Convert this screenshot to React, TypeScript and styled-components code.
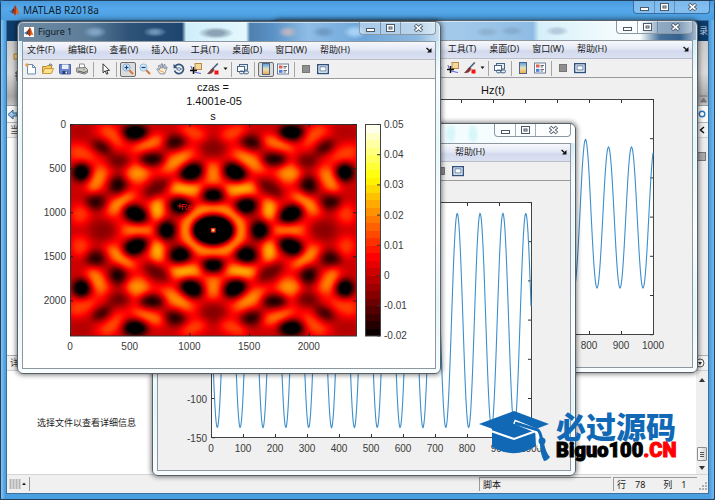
import React from "react";
import styled, { createGlobalStyle, css } from "styled-components";

const GlobalStyle = createGlobalStyle`
  * { box-sizing: border-box; }
  body { margin: 0; background: #2d5d8c; }
  button { font: inherit; color: inherit; border: 0; padding: 0; margin: 0; background: none; }
`;

const uiFont = `"Noto Sans", "Noto Sans CJK SC", sans-serif`;
const plotFont = `"Liberation Sans", Arial, sans-serif`;

/* ---------- main window ---------- */

const Desktop = styled.div`
  position: relative;
  min-height: 100vh;
  overflow: hidden;
  font-family: ${uiFont};
  font-size: 9px;
  line-height: 12px;
  color: #1a1a1a;
`;

const MainWindow = styled.section`
  display: flex;
  flex-direction: column;
  min-height: 100vh;
  padding: 0 5px 5px;
  border: 1px solid #23405f;
  border-radius: 5px 5px 2px 2px;
  background: linear-gradient(90deg, #8cc4ee 0, #4a9fe0 4px, #4a9fe0 calc(100% - 4px), #79b9ea 100%);
`;

const MainTitleBar = styled.header`
  display: flex;
  align-items: flex-start;
  justify-content: space-between;
  height: 19px;
  margin: 0 -5px;
  padding: 0 4px 0 8px;
  background: linear-gradient(#4a9ade 0, #55a8e9 40%, #4b9fe1 100%);
`;

const TitleText = styled.h1`
  display: flex;
  align-items: center;
  gap: 3px;
  margin: 0;
  height: 18px;
  font-size: 10px;
  font-weight: 400;
  color: #10202e;
`;

const MainClient = styled.div`
  display: flex;
  flex-direction: column;
  flex: 1;
  border: 1px solid #3c6e9e;
  background: #f0f0f0;
`;

const NavyStrip = styled.div`
  display: flex;
  align-items: center;
  justify-content: flex-end;
  height: 20px;
  background: #0d3c6a;
  color: #b9cbe0;
`;

const Toolstrip = styled.div`
  display: flex;
  align-items: center;
  justify-content: space-between;
  height: 65px;
  border-bottom: 1px solid #999;
  background: linear-gradient(#c9c9c9 0, #dadada 50%, #a9a9a9 86%, #c4c4c4 100%);
`;

const AddressBar = styled.div`
  display: flex;
  align-items: center;
  justify-content: space-between;
  height: 17px;
  padding-right: 1px;
  border-bottom: 1px solid #b5b5b5;
  background: #f8f8f8;
`;

const PanelHeader = styled.div`
  display: flex;
  align-items: center;
  justify-content: space-between;
  height: 15px;
  padding: 0 3px;
  border-bottom: 1px solid #cfcfcf;
  background: #f1f1f1;
  color: #444;
`;

const UpperPanel = styled.div`
  display: flex;
  justify-content: space-between;
  flex: 1;
  border-bottom: 1px solid #b0b0b0;
  background: #fff;
`;

const MarkerRail = styled.div`
  width: 12px;
  padding-top: 14px;
  background: #ececec;
`;

const Marker = styled.div`
  height: 9px;
  margin-right: 2px;
  border: 1px solid #777;
  background: #aaa;
`;

const DetailsPanel = styled.div`
  display: flex;
  height: 103px;
  background: #fff;
`;

const DetailsMessage = styled.p`
  flex: 1;
  margin: 0;
  padding: 46px 0 0 30px;
`;

const ScrollRail = styled.div`
  display: flex;
  flex-direction: column;
  align-items: center;
  justify-content: space-between;
  width: 12px;
  padding: 7px 0 4px;
  background: #efefef;
`;

const ScrollEnd = styled.div`
  display: flex;
  flex-direction: column;
  align-items: center;
  gap: 5px;
`;

const Thumb = styled.div`
  display: flex;
  flex-direction: column;
  justify-content: center;
  gap: 1px;
  width: 10px;
  height: 14px;
  padding: 0 2px;
  border: 1px solid #8c8c8c;
  border-radius: 1px;
  background: linear-gradient(90deg, #fafafa, #d5d5d5);
`;

const ThumbLine = styled.span`
  height: 1px;
  background: #555;
`;

const StatusBar = styled.footer`
  display: flex;
  align-items: center;
  height: 19px;
  border-top: 1px solid #d5d5d5;
  background: #f0f0f0;
`;

const StatusCell = styled.div<{ $width: number }>`
  display: flex;
  align-items: center;
  gap: 9px;
  width: ${(p) => p.$width}px;
  height: 14px;
  margin-right: 2px;
  padding-left: 3px;
  border-top: 1px solid #9a9a9a;
  border-left: 1px solid #9a9a9a;
`;

const StatusGrip = styled.div`
  display: flex;
  flex: 1;
  align-items: center;
  padding-left: 2px;
`;

/* ---------- caption buttons ---------- */

const Captions = styled.div<{ $tone: "blue" | "clear" }>`
  display: flex;
  height: 13px;
  border: 1px solid ${(p) => (p.$tone === "blue" ? "#3a6ea3" : "#8b98a3")};
  border-top: 0;
  border-radius: 0 0 4px 4px;
  background: ${(p) => (p.$tone === "blue" ? "rgba(170,210,245,.55)" : "rgba(255,255,255,.4)")};
`;

const CaptionButton = styled.button<{ $wide?: boolean }>`
  display: flex;
  align-items: center;
  justify-content: center;
  width: ${(p) => (p.$wide ? 35 : 20)}px;
  & + & { border-left: 1px solid rgba(70, 95, 120, .5); }
`;

const WindowButtons = ({ tone }: { tone: "blue" | "clear" }) => (
  <Captions $tone={tone}>
    <CaptionButton aria-label="Minimize">
      <svg width="11" height="10" viewBox="0 0 11 10"><rect x="1.500" y="5.500" width="8" height="3" fill="#fff" stroke="#4c5967" /></svg>
    </CaptionButton>
    <CaptionButton aria-label="Maximize">
      <svg width="11" height="10" viewBox="0 0 11 10"><rect x="1.500" y="1.500" width="8" height="7" fill="#fff" stroke="#4c5967" /><rect x="4" y="4" width="3" height="2" fill="#dfe8f0" stroke="#4c5967" /></svg>
    </CaptionButton>
    <CaptionButton $wide aria-label="Close">
      <svg width="11" height="10" viewBox="0 0 11 10"><path d="M2 2l7 6M9 2L2 8" stroke="#4c5967" strokeWidth="3.600" /><path d="M2.500 2.400l6 5.200M8.500 2.400l-6 5.200" stroke="#fff" strokeWidth="1.600" /></svg>
    </CaptionButton>
  </Captions>
);

const MatlabMark = () => (
  <svg width="11" height="11" viewBox="0 0 11 11">
    <path d="M0 6.500L3.500 4.500 5 6.500 3 8.500Z" fill="#3a7cb8" />
    <path d="M3.500 4.500C5 3.500 5.500 1 6.500 .3L5 6.500 3 8.500Z" fill="#5a2a20" />
    <path d="M6.500 .3C8 1.500 9 7 11 9.500 9 8 8 8 6.300 10.500 5.500 9.500 5 8 3.600 8 5.200 7 5.600 2.500 6.500 .3Z" fill="#e0661c" />
    <path d="M6.500 .3C7.300 2 7.500 6 6.300 10.500 5.500 9.500 5 8 3.600 8 5.200 7 5.600 2.500 6.500 .3Z" fill="#a8321a" />
  </svg>
);

/* ---------- figure window ---------- */

type Skin = "one" | "two" | "three";

const skins: Record<Skin, string> = {
  one: `radial-gradient(ellipse 12px 6px at 77px 10px, #7fa3c4 30%, transparent),
    radial-gradient(ellipse 12px 5px at 137px 10px, #6f93b6 30%, transparent),
    radial-gradient(ellipse 18px 6px at 198px 11px, #8ba3b4 40%, transparent),
    radial-gradient(ellipse 10px 6px at 270px 10px, #b6b3c3 30%, transparent),
    radial-gradient(ellipse 12px 6px at 306px 10px, #6f9cc6 30%, transparent),
    radial-gradient(ellipse 12px 7px at 337px 10px, #a5d2f6 30%, transparent),
    linear-gradient(90deg, #6e8aa2 0, #5c7d99 70px, #2f5378 110px, #1d456f 164px, #cfeefb 168px, #e3f8fd 228px, #4d80ae 232px, #5b92c6 255px, #8ebde6 290px, #6ea6da 345px, #8db9df 400px, #d3e6f3 424px)`,
  two: `radial-gradient(ellipse 6px 12px at 298px 10px, #d6f6fa 40%, transparent),
    radial-gradient(ellipse 6px 12px at 320px 10px, #d6f6fa 40%, transparent),
    linear-gradient(90deg, #e6f6fa 0, #fff 70px, #f2fcfe 300px, #fff 424px)`,
  three: `radial-gradient(ellipse 12px 5px at 212px 11px, #8fb4d3 40%, transparent),
    radial-gradient(ellipse 12px 5px at 237px 10px, #87aed1 40%, transparent),
    radial-gradient(ellipse 12px 5px at 282px 10px, #b3cbdc 40%, transparent),
    linear-gradient(90deg, #a9cdeb 0, #a3c9ea 180px, #8fbce4 258px, #d5effa 264px, #f0fafd 330px, #f9fdfe 365px, #46719a 385px, #35618d 405px, #b7cbdc 424px)`,
};

const places: Record<Skin, { left: number; top: number }> = {
  one: { left: 17, top: 21 },
  two: { left: 152, top: 123 },
  three: { left: 274, top: 20 },
};

const Frame = styled.section<{ $skin: Skin }>`
  position: absolute;
  left: ${(p) => places[p.$skin].left}px;
  top: ${(p) => places[p.$skin].top}px;
  display: flex;
  flex-direction: column;
  width: 424px;
  padding: 0 4px 4px;
  border: 1px solid #566068;
  border-radius: 6px;
  background: ${(p) => skins[p.$skin]} 0 0 / 100% 19px no-repeat,
    linear-gradient(#bfe3f2 0, #f4fcfe 15%, #e6f8fb 35%, #fbfeff 60%, #e4f6fb 80%, #f8fdff 100%);
  box-shadow: 0 0 5px 1px rgba(0, 0, 0, .5), inset 0 0 0 1px rgba(255, 255, 255, .55);
`;

const FigureTitleBar = styled.header`
  display: flex;
  justify-content: space-between;
  align-items: flex-start;
  height: 19px;
  padding-left: 2px;
`;

const FigureTitle = styled.h2<{ $covered?: boolean }>`
  display: flex;
  align-items: center;
  gap: 4px;
  margin: 0;
  height: 19px;
  font-size: 9px;
  font-weight: 400;
  color: #0c1a26;
  visibility: ${(p) => (p.$covered ? "hidden" : "visible")};
`;

const MarkTile = styled.span`
  display: flex;
  width: 10px;
  height: 10px;
  background: #fff;
  svg { width: 10px; height: 10px; }
`;

const FigureClient = styled.div`
  display: flex;
  flex-direction: column;
  border: 1px solid #8e979e;
  background: #f0f0f0;
`;

const MenuBar = styled.nav`
  display: flex;
  align-items: center;
  gap: 13px;
  height: 18px;
  padding: 0 3px 1px 4px;
  border-bottom: 1px solid #b9bdc6;
  background: linear-gradient(#f7f8fc 0, #e3e8f5 45%, #d3daee 60%, #dbe1f2 100%);
  white-space: nowrap;
`;

const MenuItem = styled.button<{ $covered: boolean }>`
  visibility: ${(p) => (p.$covered ? "hidden" : "visible")};
`;

const DockArrow = styled.span`
  display: flex;
  margin-left: auto;
`;

const ToolBar = styled.div`
  display: flex;
  align-items: center;
  gap: 1px;
  height: 19px;
  border-bottom: 1px solid #9b9b9b;
  background: #f0f0f0;
`;

const Tool = styled.button<{ $pressed?: boolean; $narrow?: boolean }>`
  display: flex;
  align-items: center;
  justify-content: center;
  width: ${(p) => (p.$narrow ? 6 : 16)}px;
  height: 15px;
  border-radius: 2px;
  ${(p) => p.$pressed && css`
    border: 1px solid #6d6d6d;
    background: #dcdcdc;
  `}
`;

const Divider = styled.span`
  width: 1px;
  height: 15px;
  margin: 0 2px;
  background: #a5a5a5;
`;

const Canvas = styled.div<{ $white?: boolean }>`
  background: ${(p) => (p.$white ? "#fff" : "#f0f0f0")};
  svg { display: block; width: 100%; height: auto; }
`;

const Icon = ({ children }: { children: React.ReactNode }) => (
  <svg width="12" height="12" viewBox="0 0 12 12" fill="none">{children}</svg>
);

const icons = {
  fresh: <Icon><path d="M2.500 1.500h5l3 3v6.500h-8Z" fill="#fff" stroke="#6a8cb0" /><path d="M7.500 1.500v3h3" stroke="#6a8cb0" /><circle cx="2" cy="2" r="1.700" fill="#e89a55" /></Icon>,
  open: <Icon><path d="M.500 10.500v-7h4l1-1h4v3" fill="#f2cc66" stroke="#b98a38" /><path d="M.500 10.500l2-5h9l-2 5Z" fill="#ffe08a" stroke="#c99a3c" /><path d="M7 1.500q2-1.500 3.500 1" stroke="#4b7cae" /></Icon>,
  save: <Icon><path d="M.500 1.500h11v9.500h-10l-1-1Z" fill="#6b86cf" stroke="#4a66a8" /><rect x="3" y="1.500" width="6.500" height="4.500" fill="#e9eefb" /><rect x="3.500" y="8" width="5" height="3" fill="#2b3d70" /><rect x="6.500" y="8.500" width="1.500" height="2" fill="#fff" /></Icon>,
  print: <Icon><path d="M3.500 5V1h4.500l1 4" fill="#fff" stroke="#8a8a8a" /><path d="M.700 5l9-.500 1.800 2v3l-3 1.500-7.800-2Z" fill="#c9c9c9" stroke="#777" /><path d="M2 8l6 1.500 2.500-1" stroke="#555" /><rect x="7" y="6" width="2" height="1" fill="#7bbf4a" /></Icon>,
  pointer: <Icon><path d="M4 .800v9l2.200-2 1.400 3.400 1.400-.600-1.400-3.200h2.900Z" fill="#fff" stroke="#222" strokeWidth=".900" /></Icon>,
  zoomIn: <Icon><path d="M7 7l4 4" stroke="#d8793a" strokeWidth="2.200" /><circle cx="4.500" cy="4.500" r="3.600" fill="#cfe6fa" stroke="#8aaed0" /><path d="M2.500 4.500h4M4.500 2.500v4" stroke="#16407a" strokeWidth="1.200" /></Icon>,
  zoomOut: <Icon><path d="M7 7l4 4" stroke="#d8793a" strokeWidth="2.200" /><circle cx="4.500" cy="4.500" r="3.600" fill="#cfe6fa" stroke="#9abcdb" /><path d="M2.500 4.500h4" stroke="#16407a" strokeWidth="1.200" /></Icon>,
  hand: <Icon><path d="M4 10.800C3 9 1.500 7.500.700 6l1-.600L3.500 7 2.500 2.500l1.200-.300L5 5.500 5 1l1.300-.200.500 4.500L8 1.500l1.200.300L8.700 6l1.500-2.200 1 .500L9.500 8.500 8.500 11Z" fill="#fff0d5" stroke="#66789a" strokeWidth=".800" /><path d="M3.500 7.500l5 2" stroke="#e3a458" /></Icon>,
  rotate: <Icon><path d="M2 3.500a4.600 4.600 0 1 1-.500 4" stroke="#35557c" strokeWidth="1.700" /><path d="M.500.800v4.400h4.200Z" fill="#35557c" /><path d="M3.500 6q2.500-3 5 0-2.500 3-5 0" stroke="#5f7fa5" /></Icon>,
  datatip: <Icon><rect x="5" y=".500" width="6.500" height="6" fill="#f5d99a" stroke="#b98a4a" /><path d="M1 3q1 6 5 6.500l5 1" stroke="#5960d8" /><path d="M0 7.500h7M3.500 4v7" stroke="#111" strokeWidth="1.500" /></Icon>,
  brush: <Icon><path d="M10.800.500L5.500 6" stroke="#46617f" strokeWidth="1.600" /><path d="M6 5.500C3.500 5.500 3.500 9 .500 10.500c3 .800 6-1 6.500-4Z" fill="#8d3230" stroke="#493038" strokeWidth=".500" /><rect x="7.500" y="7.500" width="4" height="4" fill="#f31414" /></Icon>,
  down: <svg width="5" height="4" viewBox="0 0 5 4"><path d="M0.500.500h4L2.500 3Z" fill="#111" /></svg>,
  link: <Icon><rect x="2.500" y="1.500" width="8" height="5.500" fill="#e4eaf2" stroke="#4a6486" /><rect x=".500" y="3.500" width="7" height="5" fill="#fff" stroke="#4a6486" /><rect x="2.500" y="8" width="4.500" height="2.800" rx="1.400" stroke="#42658f" /><rect x="6.500" y="8" width="5" height="2.800" rx="1.400" stroke="#42658f" /></Icon>,
  colorbar: <Icon><defs><linearGradient id="cb" x2="0" y2="1"><stop stopColor="#4e9de6" /><stop offset=".5" stopColor="#e8e2b8" /><stop offset="1" stopColor="#f5a742" /></linearGradient></defs><rect x="2.500" y=".500" width="7" height="11" fill="url(#cb)" stroke="#4c6788" /></Icon>,
  legend: <Icon><rect x=".500" y="1" width="11" height="10" fill="#fff" stroke="#68809c" /><rect x="2" y="2.500" width="3.500" height="3" fill="#e2604a" /><rect x="2" y="6.800" width="3.500" height="3" fill="#4a80d8" /><path d="M6.500 3.500h3.500M6.500 5h2.500M6.500 7.500h3.500M6.500 9h2.500" stroke="#556" strokeWidth=".900" /></Icon>,
  square: <Icon><rect x="2.500" y="2.500" width="7" height="7" fill="#8f8f8f" stroke="#777" /></Icon>,
  dock: <Icon><rect x=".700" y="1.700" width="10.600" height="8.800" fill="#fff" stroke="#2d527e" strokeWidth="1.400" /><rect x="3" y="3.800" width="6" height="4.200" fill="#fff" stroke="#5c7fa8" /></Icon>,
};

const menus = ["文件(F)", "编辑(E)", "查看(V)", "插入(I)", "工具(T)", "桌面(D)", "窗口(W)", "帮助(H)"];

/* covered: how many menus, counted from the left, lie behind the window in front. */
const FigureWindow = ({ skin, title, active, white, covered = 0, children }: {
  skin: Skin; title: string; active?: boolean; white?: boolean; covered?: number; children: React.ReactNode;
}) => (
  <Frame $skin={skin}>
    <FigureTitleBar>
      <FigureTitle $covered={covered > 0}><MarkTile><MatlabMark /></MarkTile>{title}</FigureTitle>
      <WindowButtons tone="clear" />
    </FigureTitleBar>
    <FigureClient>
      <MenuBar>
        {menus.map((m, i) => <MenuItem key={m} $covered={i < covered}>{m}</MenuItem>)}
        <DockArrow><svg width="6" height="6" viewBox="0 0 6 6"><path d="M.500 1L4 4" stroke="#111" strokeWidth="1.400" /><path d="M5.500 1v4.500H1Z" fill="#111" /></svg></DockArrow>
      </MenuBar>
      <ToolBar>
        <Tool aria-label="New">{icons.fresh}</Tool>
        <Tool aria-label="Open">{icons.open}</Tool>
        <Tool aria-label="Save">{icons.save}</Tool>
        <Tool aria-label="Print">{icons.print}</Tool>
        <Divider />
        <Tool aria-label="Select">{icons.pointer}</Tool>
        <Divider />
        <Tool aria-label="Zoom in" $pressed={active}>{icons.zoomIn}</Tool>
        <Tool aria-label="Zoom out">{icons.zoomOut}</Tool>
        <Tool aria-label="Pan">{icons.hand}</Tool>
        <Tool aria-label="Rotate">{icons.rotate}</Tool>
        <Tool aria-label="Data cursor">{icons.datatip}</Tool>
        <Tool aria-label="Brush">{icons.brush}</Tool>
        <Tool aria-label="Brush colors" $narrow>{icons.down}</Tool>
        <Divider />
        <Tool aria-label="Link plot">{icons.link}</Tool>
        <Divider />
        <Tool aria-label="Colorbar" $pressed={active}>{icons.colorbar}</Tool>
        <Tool aria-label="Legend">{icons.legend}</Tool>
        <Divider />
        <Tool aria-label="Hide tools">{icons.square}</Tool>
        <Tool aria-label="Show tools">{icons.dock}</Tool>
      </ToolBar>
      <Canvas $white={white}>{children}</Canvas>
    </FigureClient>
  </Frame>
);

/* ---------- plots ---------- */

const TickText = styled.text`
  font-family: ${plotFont};
  font-size: 10px;
  fill: #3a3a3a;
`;

const PlotTitle = styled.text`
  font-family: ${plotFont};
  font-size: 11px;
  text-anchor: middle;
  fill: #111;
`;

const FieldLabel = styled.text`
  font-family: ${plotFont};
  font-size: 9px;
  fill: #e01010;
`;

/* Lobes of one quadrant: cx, cy, rx, ry, rotation, field level (0 black .. 1 white). */
type Lobe = [number, number, number, number, number, number];
const lobes: Lobe[] = [
  [140, 60, 90, 30, 35, 0.38],
  [320, 110, 90, 36, -25, 0.4],
  [190, 245, 110, 50, -30, 0.38],
  [430, 150, 50, 50, 0, 0.4],
  [344, 195, 80, 32, 0, 0.42],
  [60, 130, 70, 60, 20, 0.38],
  [30, 20, 40, 24, 0, 0.26],
  [98, 317, 40, 34, 0, 0.21],
  [428, 70, 42, 30, 0, 0.2],
  [258, 192, 46, 22, -30, 0.13],
  [144, 108, 34, 22, 0, 0.14],
  [125, 30, 42, 20, 42, 0.5],
  [236, 57, 50, 18, -18, 0.58],
  [319, 109, 50, 18, -30, 0.62],
  [344, 193, 48, 18, 4, 0.68],
  [430, 150, 20, 36, 0, 0.6],
  [201, 147, 36, 28, 0, 0.6],
  [80, 167, 22, 44, 28, 0.59],
  [32, 88, 44, 26, 25, 0.47],
  [149, 235, 48, 20, -38, 0.62],
  [261, 255, 20, 36, 0, 0.68],
  [204, 318, 52, 19, 0, 0.6],
  [30, 268, 28, 32, 35, 0.46],
  [368, 25, 44, 21, 20, 0.48],
  [194, 24, 36, 21, 0, -0.17],
  [33, 143, 26, 27, 0, -0.17],
  [94, 68, 32, 17, 30, 0.02],
  [245, 105, 38, 17, 0, -0.04],
  [314, 54, 32, 20, -10, 0.01],
  [363, 143, 35, 25, -25, -0.17],
  [430, 212, 34, 21, 0, -0.17],
  [194, 268, 37, 24, 25, -0.17],
  [288, 318, 25, 28, 0, -0.15],
  [330, 243, 31, 23, 10, -0.17],
  [142, 182, 25, 27, 0, -0.01],
  [75, 232, 30, 22, 0, 0.02],
];

const grey = (v: number) => {
  const g = Math.round(((v + 0.3) / 1.2) * 255);
  return `rgb(${g},${g},${g})`;
};

const hot = (v: number) => {
  const c = (n: number) => Math.round(Math.max(0, Math.min(1, n)) * 255);
  return `rgb(${c(v / 0.375)},${c((v - 0.375) / 0.375)},${c((v - 0.75) / 0.25)})`;
};

const bands = Array.from({ length: 28 }, (_, i) => (i + 0.5) / 28);

const FieldMap = () => (
  <svg viewBox="1 0 412 289">
    <defs>
      <filter id="field" x="0" y="0" width="100%" height="100%" colorInterpolationFilters="sRGB">
        <feGaussianBlur stdDeviation="12" />
        <feComponentTransfer>
          <feFuncR type="linear" slope="3.2" intercept="-0.8" />
          <feFuncG type="linear" slope="3.2" intercept="-1.8" />
          <feFuncB type="linear" slope="4.8" intercept="-4.2" />
        </feComponentTransfer>
      </filter>
      <clipPath id="fieldClip"><rect width="856" height="634" /></clipPath>
      <g id="quadrant">
        {lobes.map(([cx, cy, rx, ry, a, v], i) => (
          <ellipse key={i} cx={cx} cy={cy} rx={rx} ry={ry} transform={`rotate(${a} ${cx} ${cy})`} fill={grey(v)} />
        ))}
      </g>
      <clipPath id="quarter"><rect x="-60" y="-60" width="489" height="378" /></clipPath>
    </defs>
    <PlotTitle x="191" y="12">czas =</PlotTitle>
    <PlotTitle x="192" y="26">1.4001e-05</PlotTitle>
    <PlotTitle x="191" y="41">s</PlotTitle>
    <g transform="translate(48.500 45.500) scale(.3335)">
      <g clipPath="url(#fieldClip)">
        <g filter="url(#field)">
          <rect x="-60" y="-60" width="976" height="754" fill={grey(0.3)} />
          <g clipPath="url(#quarter)"><use href="#quadrant" /></g>
          <g transform="translate(856 0) scale(-1 1)"><g clipPath="url(#quarter)"><use href="#quadrant" /></g></g>
          <g transform="translate(0 634) scale(1 -1)"><g clipPath="url(#quarter)"><use href="#quadrant" /></g></g>
          <g transform="translate(856 634) scale(-1 -1)"><g clipPath="url(#quarter)"><use href="#quadrant" /></g></g>
          <ellipse cx="428" cy="317" rx="81" ry="63" fill={grey(-0.3)} stroke={grey(0.64)} strokeWidth="36" />
        </g>
        <rect x="421" y="310" width="14" height="14" fill="#ff3010" />
        <rect x="425" y="314" width="6" height="6" fill="#ffe9a0" />
      </g>
    </g>
    <FieldLabel x="159" y="131">Re</FieldLabel>
    <path d="M155.500 127h5M158 124.500v5" stroke="#e01010" />
    <rect x="48.500" y="45.500" width="286" height="211.500" fill="none" stroke="#333" />
    {[0, 500, 1000, 1500, 2000].map((n) => (
      <React.Fragment key={n}>
        <path d={`M${48.5 + n * 0.1194} 257v-3M${48.5 + n * 0.1194} 45v3M48 ${45.5 + n * 0.0882}h3M334 ${45.5 + n * 0.0882}h-3`} stroke="#222" />
        <TickText x={48 + n * 0.1194} y="271" textAnchor="middle">{n}</TickText>
        <TickText x="44" y={49 + n * 0.0882} textAnchor="end">{n}</TickText>
      </React.Fragment>
    ))}
    <g shapeRendering="crispEdges">
      {bands.map((v, i) => (
        <rect key={i} x="343" y={257 - ((i + 1) * 211.5) / 28} width="15" height="8" fill={hot(v)} />
      ))}
    </g>
    <rect x="343.500" y="45.500" width="15" height="211.500" fill="none" stroke="#444" />
    {["0.05", "0.04", "0.03", "0.02", "0.01", "0", "-0.01", "-0.02"].map((t, i) => (
      <React.Fragment key={t}>
        <path d={`M358 ${45.5 + i * 30.2}h-3`} stroke="#333" />
        <TickText x="362" y={49 + i * 30.2}>{t}</TickText>
      </React.Fragment>
    ))}
  </svg>
);

const trace = (y: (x: number) => number) =>
  Array.from({ length: 640 }, (_, i) => 54.5 + i / 2)
    .map((x, i) => `${i ? "L" : "M"}${x.toFixed(1)} ${y(x).toFixed(2)}`)
    .join("");

const tracePoint = trace((x) => 139.5 + 107 * Math.cos((2 * Math.PI * (x - 60.3)) / 22.85));
const traceHz = trace((x) => {
  const c = Math.cos((2 * Math.PI * (x - 306.5)) / 23);
  return 139.5 - (x < 318 && c > 0 ? 78 : 70.5) * c;
});

/* firstX, firstY: the first tick of each axis whose label is drawn. */
const WavePlot = ({ title, d, firstX, firstY }: { title?: string; d: string; firstX: number; firstY: number }) => (
  <svg viewBox="1 0 412 289">
    {title && <PlotTitle x="214" y="16">{title}</PlotTitle>}
    <rect x="54.500" y="21.500" width="320" height="235" fill="#fff" stroke="#444" />
    {Array.from({ length: 11 }, (_, i) => (
      <React.Fragment key={i}>
        <path d={`M${54.5 + i * 32} 256v-3M${54.5 + i * 32} 22v3`} stroke="#333" />
        {i >= firstX && <TickText x={54 + i * 32} y="271" textAnchor="middle">{i * 100}</TickText>}
      </React.Fragment>
    ))}
    {Array.from({ length: 7 }, (_, i) => (
      <React.Fragment key={i}>
        <path d={`M55 ${21.5 + i * 39.2}h3M374 ${21.5 + i * 39.2}h-3`} stroke="#333" />
        {i >= firstY && <TickText x="50" y={26 + i * 39.2} textAnchor="end">{150 - i * 50}</TickText>}
      </React.Fragment>
    ))}
    <path d={d} fill="none" stroke="#3c8fcb" strokeWidth="1.100" />
  </svg>
);

/* ---------- brand overlay ---------- */

const Brand = styled.div`
  position: absolute;
  left: 479px;
  top: 410px;
  display: flex;
  gap: 6px;
`;

const BrandText = styled.div`
  display: flex;
  flex-direction: column;
  white-space: nowrap;
`;

const BrandName = styled.strong`
  font: 900 30px/30px "Noto Sans CJK SC", sans-serif;
  color: #1169b5;
`;

const BrandSite = styled.strong`
  font: 900 20px/20px Roboto, sans-serif;
  color: #000;
  -webkit-text-stroke: 1px currentColor;
  em { font-style: normal; color: #f00; }
`;

export default function App() {
  return (
    <>
      <GlobalStyle />
      <Desktop>
        <MainWindow>
          <MainTitleBar>
            <TitleText><MatlabMark />MATLAB R2018a</TitleText>
            <WindowButtons tone="blue" />
          </MainTitleBar>
          <MainClient>
            <NavyStrip>录</NavyStrip>
            <Toolstrip>
              <svg width="12" height="40" viewBox="0 0 12 40"><rect x="7" y="1" width="5" height="5" fill="#f4d38a" stroke="#b98528" /><path d="M8 20h4M8 23h4M10 18v10" stroke="#444" /></svg>
              <svg width="9" height="60" viewBox="0 0 9 60"><path d="M1 53h7M4.500 55l3 4h-6Z" stroke="#777" fill="#777" /></svg>
            </Toolstrip>
            <AddressBar>
              <svg width="10" height="11" viewBox="0 0 10 11"><path d="M1 5.500L6 1v3h4v3H6v3Z" fill="#9cc9ee" stroke="#33658f" /></svg>
              <svg width="9" height="11" viewBox="0 0 9 11"><circle cx="4" cy="5" r="2.800" fill="#fff" stroke="#2c74c4" strokeWidth="1.400" /></svg>
            </AddressBar>
            <PanelHeader><span>当</span><svg width="6" height="8" viewBox="0 0 6 8"><path d="M5 1L1.500 4 5 7" fill="none" stroke="#111" strokeWidth="1.500" /></svg></PanelHeader>
            <UpperPanel><span /><MarkerRail><Marker /></MarkerRail></UpperPanel>
            <PanelHeader><span>详</span><svg width="10" height="10" viewBox="0 0 10 10"><circle cx="5" cy="5" r="4" fill="#fff" stroke="#555" /><path d="M3 4h4L5 7Z" fill="#333" /></svg></PanelHeader>
            <DetailsPanel>
              <DetailsMessage>选择文件以查看详细信息</DetailsMessage>
              <ScrollRail>
                <svg width="6" height="4" viewBox="0 0 6 4"><path d="M0 4h6L3 0Z" fill="#333" /></svg>
                <ScrollEnd>
                  <Thumb><ThumbLine /><ThumbLine /><ThumbLine /></Thumb>
                  <svg width="6" height="4" viewBox="0 0 6 4"><path d="M0 0h6L3 4Z" fill="#333" /></svg>
                </ScrollEnd>
              </ScrollRail>
            </DetailsPanel>
            <StatusBar>
              <StatusGrip>
                <svg width="22" height="14" viewBox="0 0 22 14"><path d="M1.500 2v10M4.500 2v10M7.500 2v10M10.500 2v10" stroke="#b5b5b5" strokeWidth="2" /><path d="M13 8h4l-2-2.500Z" fill="#222" /><path d="M20.500 0v14" stroke="#999" /></svg>
              </StatusGrip>
              <StatusCell $width={132}>脚本</StatusCell>
              <StatusCell $width={84}><span>行</span><span>78</span><span /><span>列</span><span>1</span></StatusCell>
              <svg width="9" height="14" viewBox="0 0 9 14"><path d="M6 6h2M3 9h2M6 9h2M0 12h2M3 12h2M6 12h2" stroke="#999" strokeWidth="1.500" /></svg>
            </StatusBar>
          </MainClient>
        </MainWindow>
        <FigureWindow skin="three" title="Figure 3" covered={4}><WavePlot title="Hz(t)" d={traceHz} firstX={8} firstY={7} /></FigureWindow>
        <FigureWindow skin="two" title="Figure 2" covered={7}><WavePlot d={tracePoint} firstX={0} firstY={5} /></FigureWindow>
        <FigureWindow skin="one" title="Figure 1" active white><FieldMap /></FigureWindow>
        <Brand>
          <svg width="71" height="52" viewBox="0 0 71 52">
            <path d="M13 18Q34 28 56 18L57 36Q36 50 13 37Z" fill="#1169b5" />
            <path d="M12 21L35 29 57 21" fill="none" stroke="#fff" strokeWidth="2" />
            <path d="M35 1L70 14 36 27 0 14Z" fill="#1169b5" />
            <path d="M35 11.500L58 21Q61 26 60.500 38" fill="none" stroke="#fff" strokeWidth="4.500" />
            <path d="M36 13L59 20Q63 24 62.500 36" fill="none" stroke="#1169b5" strokeWidth="3" />
            <circle cx="63" cy="31" r="3.500" fill="#1169b5" />
            <path d="M61 33L65 33Q67 43 71 47Q68 51 65 51Q61 44 61 33Z" fill="#1169b5" />
          </svg>
          <BrandText>
            <BrandName>必过源码</BrandName>
            <BrandSite>Biguo100<em>.CN</em></BrandSite>
          </BrandText>
        </Brand>
      </Desktop>
    </>
  );
}
